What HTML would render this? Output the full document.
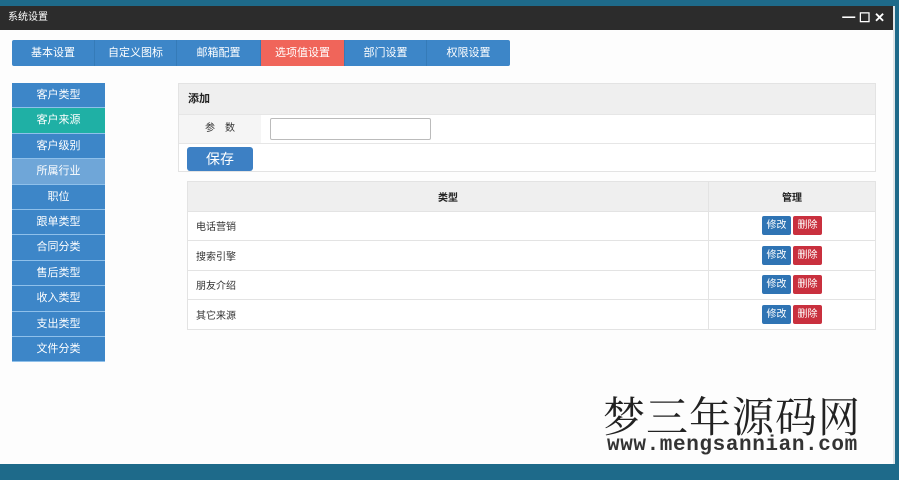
<!DOCTYPE html>
<html><head><meta charset="utf-8"><style>
*{margin:0;padding:0;box-sizing:border-box}
body{width:899px;height:480px;background:#1e6a8a;position:relative;overflow:hidden;font-family:"Liberation Sans","Noto Sans CJK SC",sans-serif;font-size:11px}
.win{position:absolute;left:0;top:6px;width:895px;height:458px;background:#fdfdfd;border-right:2px solid #dfe5e8}
.title{height:24px;background:#2c2c2c;color:#fff;font-size:10px;line-height:24px;padding-left:8px;position:relative}
.ctl{position:absolute;right:8px;top:0;line-height:24px;color:#fff;font-size:13px;font-weight:bold}
.tabs{position:absolute;left:12px;top:34px;width:498px;height:26px;background:#3d86c8;display:flex;border-radius:2px}
.tabs div{flex:none;color:#fff;text-align:center;line-height:26px;border-right:1px solid #357bb8;font-size:11px}
.side{position:absolute;left:12px;top:77px;width:93px}
.side div{height:25.4px;line-height:25px;text-align:center;color:#fff;background:#3d86c8;border-bottom:1px solid #8fc0ea;font-size:11px}
.form{position:absolute;left:178px;top:77px;width:698px;height:89px;border:1px solid #e3e3e3;background:#fff}
.fh{height:30px;background:#efefef;line-height:30px;padding-left:9px;font-weight:bold;font-size:11px;color:#222}
.fr{height:30px;border-top:1px solid #e6e6e6;border-bottom:1px solid #e6e6e6;position:relative}
.fr .lb{position:absolute;left:0;top:0;width:82px;height:28px;background:#f5f5f5;text-align:center;line-height:28px;font-size:10px;color:#333}
.fr input{position:absolute;left:91px;top:3px;width:161px;height:22px;border:1px solid #bbb;border-radius:2px}
.save{position:absolute;left:8px;top:63px;width:66px;height:24px;background:#3d80c4;color:#fff;font-size:14px;line-height:24px;text-align:center;border-radius:3px}
table{position:absolute;left:187px;top:175px;width:689px;border-collapse:collapse;background:#fff}
td,th{border:1px solid #e3e3e3;height:29.5px;font-size:10px;color:#333}
th{background:#efefef;font-weight:bold;color:#222}
td{padding-left:8px}
td.m{text-align:center;padding:0}
.b{display:inline-block;width:29px;height:19px;line-height:19px;color:#fff;font-size:10px;border-radius:2px;margin:0 1px}
.e{background:#2f74b4}.d{background:#c9303e}
.wm{position:absolute;left:603px;top:390px;font-family:"Noto Serif CJK SC",serif;font-size:42px;color:#222;letter-spacing:1px;line-height:50px}
.url{position:absolute;left:607px;top:434px;font-family:"Liberation Mono",monospace;font-size:21px;font-weight:bold;color:#333;letter-spacing:0.6px}
</style></head><body>
<div class="win">
<div class="title">系统设置<span class="ctl">━ ☐ ✕</span></div>
<div class="tabs"><div style="width:83px">基本设置</div><div style="width:82px">自定义图标</div><div style="width:84px">邮箱配置</div><div style="width:84px;background:#f0655a">选项值设置</div><div style="width:82px">部门设置</div><div style="width:83px;border:none">权限设置</div></div>
<div class="side"><div>客户类型</div><div style="background:#1fb0a5">客户来源</div><div>客户级别</div><div style="background:#6fa6d8">所属行业</div><div>职位</div><div>跟单类型</div><div>合同分类</div><div>售后类型</div><div>收入类型</div><div>支出类型</div><div>文件分类</div></div>
<div class="form"><div class="fh">添加</div><div class="fr"><div class="lb">参　数</div><input></div><div class="save">保存</div></div>
<table><tr><th style="width:521px">类型</th><th>管理</th></tr>
<tr><td>电话营销</td><td class="m"><span class="b e">修改</span><span class="b d">删除</span></td></tr>
<tr><td>搜索引擎</td><td class="m"><span class="b e">修改</span><span class="b d">删除</span></td></tr>
<tr><td>朋友介绍</td><td class="m"><span class="b e">修改</span><span class="b d">删除</span></td></tr>
<tr><td>其它来源</td><td class="m"><span class="b e">修改</span><span class="b d">删除</span></td></tr>
</table>
</div>
<div class="wm">梦三年源码网</div>
<div class="url">www.mengsannian.com</div>
</body></html>
